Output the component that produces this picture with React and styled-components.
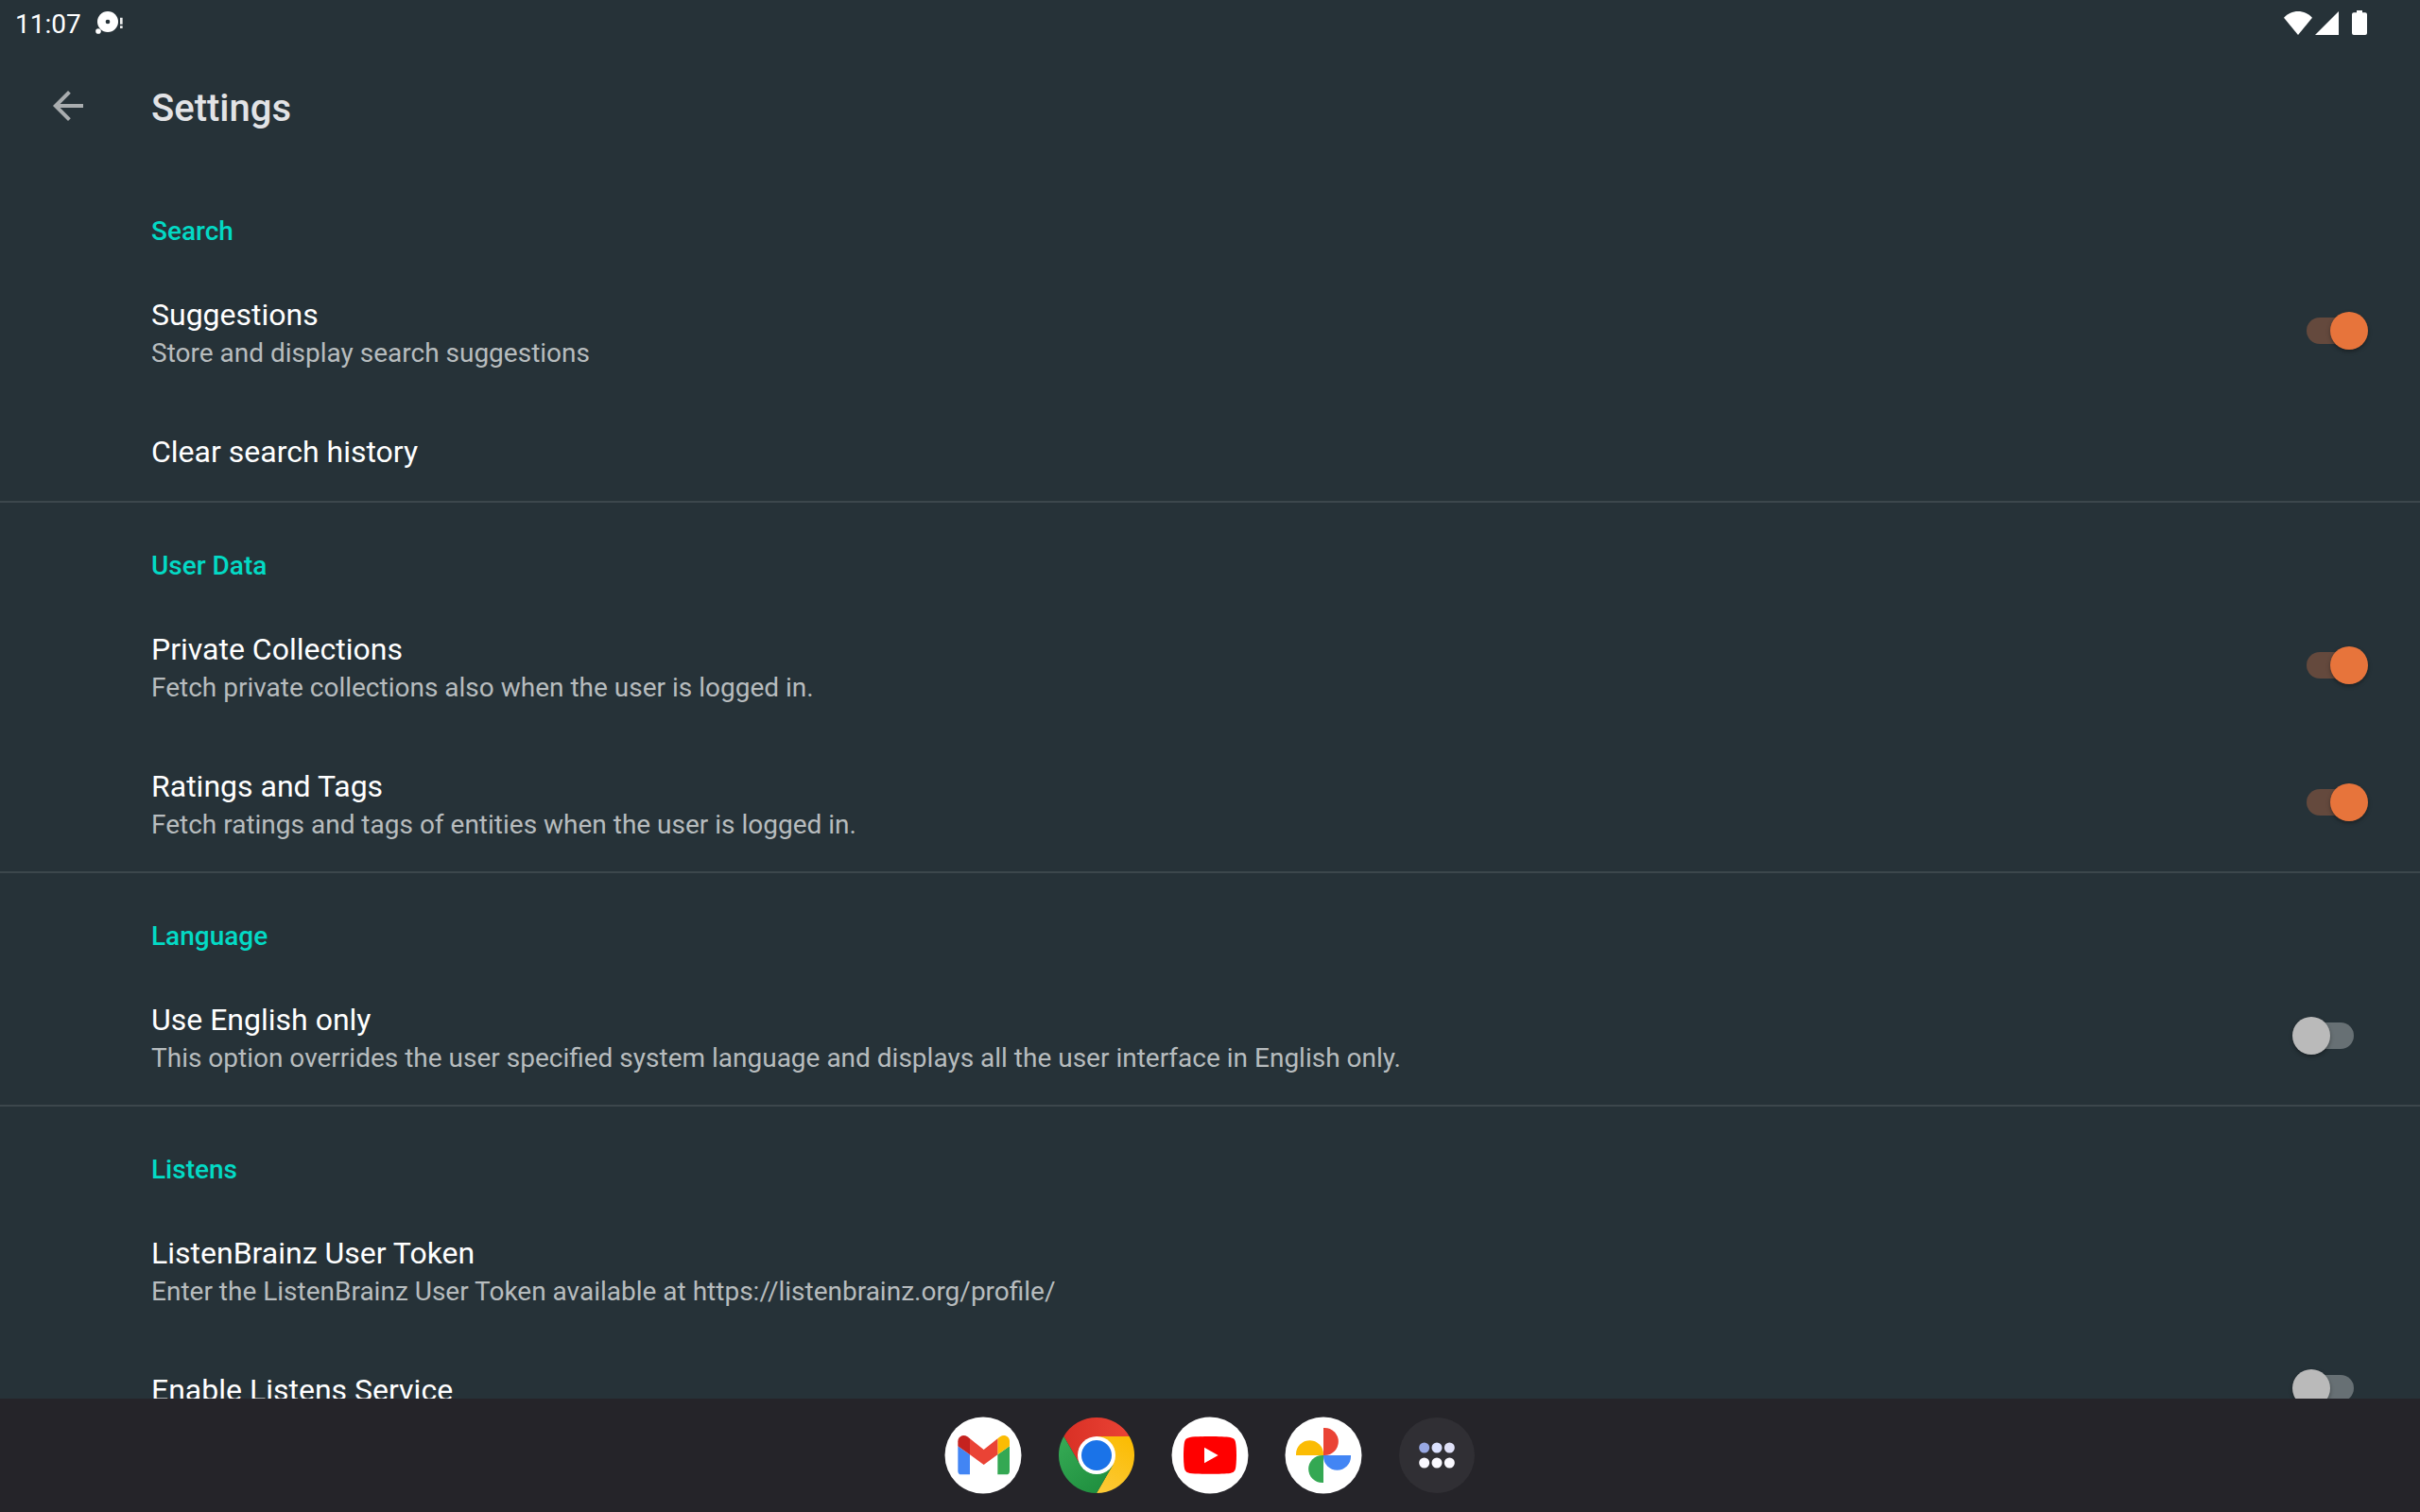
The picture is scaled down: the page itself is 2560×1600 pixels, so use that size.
import React, { useId } from 'react';
import styled, { createGlobalStyle, css } from 'styled-components';

const color = {
  background: '#263238',
  divider: '#3c474c',
  text: '#ffffff',
  muted: '#b7bcbe',
  heading: '#e2e3e6',
  icon: '#a9adaf',
  accent: '#03dac5',
  thumbOn: '#e7743b',
  trackOn: '#64493d',
  thumbOff: '#bababa',
  trackOff: '#677074',
  dock: '#252429',
};

const GlobalStyle = createGlobalStyle`
  * { box-sizing: border-box; }
  html, body { margin: 0; background: ${color.background}; }
  body, button, input { font-family: Roboto, "Noto Sans", sans-serif; }
`;

const Screen = styled.div`
  display: flex;
  flex-direction: column;
  height: 100vh;
  overflow: hidden;
  background: ${color.background};
  color: ${color.text};
`;

const StatusBar = styled.div`
  display: flex;
  flex: none;
  align-items: center;
  justify-content: space-between;
  height: 48px;
  padding: 0 56px 0 16px;
`;

const StatusGroup = styled.div`
  display: flex;
  align-items: center;
  gap: ${(p) => p.$gap}px;
`;

const Clock = styled.time`
  padding-top: 4px;
  font-size: 28px;
  line-height: 32px;
`;

const Toolbar = styled.header`
  display: flex;
  flex: none;
  align-items: center;
  gap: 64px;
  height: 128px;
  padding: 0 48px;
`;

const BackButton = styled.button`
  display: flex;
  padding: 0;
  border: 0;
  background: none;
  color: ${color.icon};
`;

const Title = styled.h1`
  margin: 0;
  padding-top: 6px;
  font-size: 40px;
  font-weight: 500;
  line-height: 48px;
  color: ${color.heading};
`;

const Preferences = styled.main`
  flex: 1;
  min-height: 0;
  overflow: hidden;
`;

const Category = styled.section`
  & + & { box-shadow: inset 0 2px 0 ${color.divider}; }
`;

const CategoryTitle = styled.h2`
  margin: 0;
  padding: 53px 160px 17px;
  font-size: 28px;
  font-weight: 500;
  line-height: 32px;
  color: ${color.accent};
`;

const rowStyle = css`
  display: flex;
  align-items: center;
  justify-content: space-between;
  width: 100%;
  padding: 0 55px 0 160px;
  border: 0;
  background: none;
  color: inherit;
  text-align: left;
`;

const SwitchRow = styled.label`${rowStyle}`;
const ActionRow = styled.button`${rowStyle}`;

const RowText = styled.span`
  display: flex;
  flex-direction: column;
  gap: 4px;
  padding: 35px 0 32px;
`;

const RowTitle = styled.span`
  font-size: 32px;
  line-height: 40px;
`;

const RowSummary = styled.span`
  font-size: 28px;
  line-height: 34px;
  color: ${color.muted};
`;

const Switch = styled.input`
  appearance: none;
  display: flex;
  flex: none;
  position: relative;
  align-items: center;
  width: 80px;
  height: 40px;
  margin: 0 0 2px;

  &::before {
    content: '';
    width: 50px;
    height: 28px;
    margin: 0 auto;
    border-radius: 14px;
    background: ${color.trackOff};
  }

  &::after {
    content: '';
    position: absolute;
    top: 0;
    left: 0;
    width: 40px;
    height: 40px;
    border-radius: 50%;
    background: ${color.thumbOff};
    box-shadow: 0 2px 4px rgba(0, 0, 0, 0.35);
  }

  &:checked::before { background: ${color.trackOn}; }
  &:checked::after {
    left: 40px;
    background: ${color.thumbOn};
  }
`;

const Dock = styled.nav`
  display: flex;
  flex: none;
  align-items: center;
  justify-content: center;
  gap: 40px;
  height: 120px;
  background: ${color.dock};
`;

const DockButton = styled.button`
  display: flex;
  padding: 0;
  border: 0;
  background: none;
`;

const DockSvg = styled.svg`
  display: block;
  width: 80px;
  height: 80px;
  overflow: visible;
`;

const MessageIcon = () => (
  <svg width="29" height="24" viewBox="0 0 87 72" fill="#fff" aria-hidden="true">
    <circle cx="39" cy="33" r="33" />
    <circle cx="39" cy="33" r="7" fill={color.background} />
    <circle cx="9" cy="63" r="8.5" />
    <path d="M78 20h8v21h-8zM78 46h8v8h-8z" fill="#eceeee" />
  </svg>
);

const WifiIcon = () => (
  <svg width="30" height="25" viewBox="0 0 90 75" fill="#fff" aria-hidden="true">
    <path d="M45 75 0 20C12 7 28 0 45 0s33 7 45 20z" />
  </svg>
);

const SignalIcon = () => (
  <svg width="25" height="25" viewBox="0 0 75 75" fill="#fff" aria-hidden="true">
    <path d="M75 0v75H0z" />
  </svg>
);

const BatteryIcon = () => (
  <svg width="16" height="26" viewBox="0 0 48 78" fill="#fff" aria-hidden="true">
    <path d="M15 0h18v7h9a6 6 0 0 1 6 6v59a6 6 0 0 1-6 6H6a6 6 0 0 1-6-6V13a6 6 0 0 1 6-6h9z" />
  </svg>
);

const ArrowIcon = () => (
  <svg width="48" height="48" viewBox="0 0 24 24" fill="currentColor" aria-hidden="true">
    <path d="M20 11H7.83l5.59-5.59L12 4l-8 8 8 8 1.41-1.41L7.83 13H20z" />
  </svg>
);

const GmailIcon = () => (
  <DockSvg viewBox="0 0 240 240">
    <circle cx="120" cy="120" r="121.5" fill="#fff" />
    <path fill="#4285f4" d="M40 91l38 27v63H51a11 11 0 0 1-11-11z" />
    <path fill="#34a853" d="M204 91l-38 27v63h27a11 11 0 0 0 11-11z" />
    <path fill="#c5221f" d="M40 91V76c0-16 17-24 30-15l8 6v51z" />
    <path fill="#fbbc04" d="M204 91V76c0-16-17-24-30-15l-8 6v51z" />
    <path fill="#ea4335" d="M78 67l44 35 44-35v51l-44 32-44-32z" />
  </DockSvg>
);

const ChromeIcon = () => (
  <DockSvg viewBox="0 0 240 240">
    <defs>
      <linearGradient id="chromeRed" x1="0" x2="1">
        <stop offset="0" stopColor="#d93025" />
        <stop offset="1" stopColor="#ea4335" />
      </linearGradient>
      <linearGradient id="chromeGreen" x1="0.8" y1="1" x2="0.1" y2="0.1">
        <stop offset="0" stopColor="#1e8e3e" />
        <stop offset="1" stopColor="#34a853" />
      </linearGradient>
      <linearGradient id="chromeYellow" x1="0.3" y1="1" x2="0.7" y2="0">
        <stop offset="0" stopColor="#fcc934" />
        <stop offset="1" stopColor="#fbbc04" />
      </linearGradient>
    </defs>
    <path fill="url(#chromeRed)" d="M16 60a120 120 0 0 1 208 0H120v60l-52 30z" />
    <path fill="url(#chromeYellow)" d="M224 60a120 120 0 0 1-104 180l52-90-52-30V60z" />
    <path fill="url(#chromeGreen)" d="M16 60a120 120 0 0 0 104 180l52-90-52-30-52 30z" />
    <circle cx="120" cy="120" r="60" fill="#fff" />
    <circle cx="120" cy="120" r="48" fill="#1a73e8" />
  </DockSvg>
);

const YouTubeIcon = () => (
  <DockSvg viewBox="0 0 240 240">
    <circle cx="120" cy="120" r="121.5" fill="#fff" />
    <path
      fill="#f00"
      d="M120 60c26 0 52 1 64 3 10 2 15 6 17 15 4 20 4 64 0 84-2 9-7 13-17 15-24 3-104 3-128 0-10-2-15-6-17-15-4-20-4-64 0-84 2-9 7-13 17-15 12-2 38-3 64-3z"
    />
    <path fill="#fff" d="M102 95l44 25-44 25z" />
  </DockSvg>
);

const PhotosIcon = () => (
  <DockSvg viewBox="0 0 240 240">
    <circle cx="120" cy="120" r="121.5" fill="#fff" />
    <path fill="#ea4335" d="M120 33h4a43.5 43.5 0 0 1 0 87h-4z" />
    <path fill="#4285f4" d="M207 120v4a43.5 43.5 0 0 1-87 0v-4z" />
    <path fill="#34a853" d="M120 207h-4a43.5 43.5 0 0 1 0-87h4z" />
    <path fill="#fbbc04" d="M33 120v-4a43.5 43.5 0 0 1 87 0v4z" />
  </DockSvg>
);

const AppsIcon = () => (
  <DockSvg viewBox="0 0 240 240">
    <circle cx="120" cy="120" r="120" fill="#302f34" />
    <circle cx="80" cy="96" r="16.5" fill="#98a8e3" />
    <circle cx="120" cy="96" r="16.5" fill="#dbe1ff" />
    <circle cx="160" cy="96" r="16.5" fill="#dfe0f7" />
    <circle cx="80" cy="144" r="16.5" fill="#faf9ff" />
    <circle cx="120" cy="144" r="16.5" fill="#faf9ff" />
    <circle cx="160" cy="144" r="16.5" fill="#faf9ff" />
  </DockSvg>
);

const categories = [
  {
    title: 'Search',
    items: [
      { title: 'Suggestions', summary: 'Store and display search suggestions', on: true },
      { title: 'Clear search history' },
    ],
  },
  {
    title: 'User Data',
    items: [
      {
        title: 'Private Collections',
        summary: 'Fetch private collections also when the user is logged in.',
        on: true,
      },
      {
        title: 'Ratings and Tags',
        summary: 'Fetch ratings and tags of entities when the user is logged in.',
        on: true,
      },
    ],
  },
  {
    title: 'Language',
    items: [
      {
        title: 'Use English only',
        summary:
          'This option overrides the user specified system language and displays all the user interface in English only.',
        on: false,
      },
    ],
  },
  {
    title: 'Listens',
    items: [
      {
        title: 'ListenBrainz User Token',
        summary: 'Enter the ListenBrainz User Token available at https://listenbrainz.org/profile/',
      },
      { title: 'Enable Listens Service', on: false },
    ],
  },
];

const apps = [
  ['Gmail', GmailIcon],
  ['Chrome', ChromeIcon],
  ['YouTube', YouTubeIcon],
  ['Photos', PhotosIcon],
  ['All apps', AppsIcon],
];

function Preference({ title, summary, on }) {
  const id = useId();
  const text = (
    <RowText>
      <RowTitle>{title}</RowTitle>
      {summary && <RowSummary>{summary}</RowSummary>}
    </RowText>
  );

  if (on === undefined) {
    return <ActionRow type="button">{text}</ActionRow>;
  }
  return (
    <SwitchRow htmlFor={id}>
      {text}
      <Switch id={id} type="checkbox" role="switch" defaultChecked={on} />
    </SwitchRow>
  );
}

export default function App() {
  return (
    <>
      <GlobalStyle />
      <Screen>
        <StatusBar>
          <StatusGroup $gap={15}>
            <Clock>11:07</Clock>
            <MessageIcon />
          </StatusGroup>
          <StatusGroup $gap={14}>
            <StatusGroup $gap={3}>
              <WifiIcon />
              <SignalIcon />
            </StatusGroup>
            <BatteryIcon />
          </StatusGroup>
        </StatusBar>
        <Toolbar>
          <BackButton type="button" aria-label="Navigate up">
            <ArrowIcon />
          </BackButton>
          <Title>Settings</Title>
        </Toolbar>
        <Preferences>
          {categories.map((category) => (
            <Category key={category.title}>
              <CategoryTitle>{category.title}</CategoryTitle>
              {category.items.map((item) => (
                <Preference key={item.title} {...item} />
              ))}
            </Category>
          ))}
        </Preferences>
        <Dock aria-label="Apps">
          {apps.map(([name, Icon]) => (
            <DockButton key={name} type="button" aria-label={name}>
              <Icon />
            </DockButton>
          ))}
        </Dock>
      </Screen>
    </>
  );
}
